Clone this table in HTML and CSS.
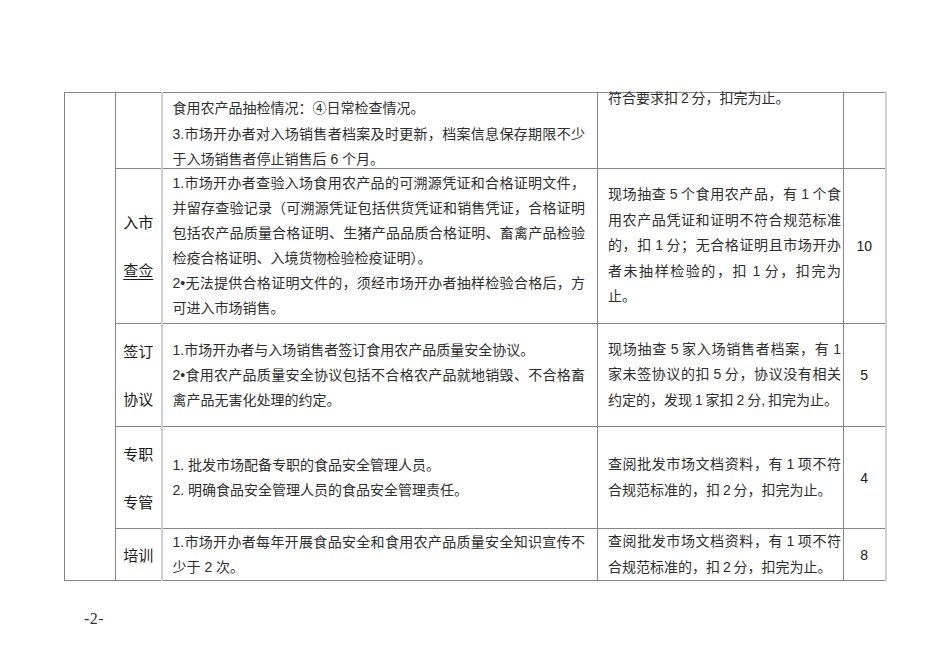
FILE: index.html
```html
<!DOCTYPE html>
<html lang="zh-CN">
<head>
<meta charset="utf-8">
<title>批发市场检查评分表</title>
<link rel="stylesheet" href="styles.css">
</head>
<body>
<div class="page">
  <table class="grid">
    <colgroup>
      <col class="w-cat">
      <col class="w-lab">
      <col class="w-req">
      <col class="w-std">
      <col class="w-pts">
    </colgroup>
    <tr class="r1">
      <td class="cat" rowspan="5"></td>
      <td class="lab"></td>
      <td class="req">
        <div class="first">
          <p>食用农产品抽检情况：④日常检查情况。</p>
          <p>3.市场开办者对入场销售者档案及时更新，档案信息保存期限不少于入场销售者停止销售后 6 个月。</p>
        </div>
      </td>
      <td class="std"><div class="carry">符合要求扣 2 分，扣完为止。</div></td>
      <td class="pts"></td>
    </tr>
    <tr class="r2">
      <td class="lab"><div>入市</div><div class="ul">查佥</div></td>
      <td class="req">
        <p>1.市场开办者查验入场食用农产品的可溯源凭证和合格证明文件，并留存查验记录（可溯源凭证包括供货凭证和销售凭证，合格证明包括农产品质量合格证明、生猪产品品质合格证明、畜禽产品检验检疫合格证明、入境货物检验检疫证明）。</p>
        <p>2•无法提供合格证明文件的，须经市场开办者抽样检验合格后，方可进入市场销售。</p>
      </td>
      <td class="std">现场抽查 5 个食用农产品，有 1 个食用农产品凭证和证明不符合规范标准的，扣 1 分；无合格证明且市场开办者未抽样检验的，扣 1 分，扣完为止。</td>
      <td class="pts">10</td>
    </tr>
    <tr class="r3">
      <td class="lab"><div>签订</div><div>协议</div></td>
      <td class="req">
        <p>1.市场开办者与入场销售者签订食用农产品质量安全协议。</p>
        <p>2•食用农产品质量安全协议包括不合格农产品就地销毁、不合格畜禽产品无害化处理的约定。</p>
      </td>
      <td class="std">现场抽查 5 家入场销售者档案，有 1 家未签协议的扣 5 分，协议没有相关约定的，发现 1 家扣 2 分, 扣完为止。</td>
      <td class="pts">5</td>
    </tr>
    <tr class="r4">
      <td class="lab"><div>专职</div><div>专管</div></td>
      <td class="req">
        <p>1. 批发市场配备专职的食品安全管理人员。</p>
        <p>2. 明确食品安全管理人员的食品安全管理责任。</p>
      </td>
      <td class="std">查阅批发市场文档资料，有 1 项不符合规范标准的，扣 2 分，扣完为止。</td>
      <td class="pts">4</td>
    </tr>
    <tr class="r5">
      <td class="lab"><div>培训</div></td>
      <td class="req">
        <p>1.市场开办者每年开展食品安全和食用农产品质量安全知识宣传不少于 2 次。</p>
      </td>
      <td class="std">查阅批发市场文档资料，有 1 项不符合规范标准的，扣 2 分，扣完为止。</td>
      <td class="pts">8</td>
    </tr>
  </table>
  <div class="folio">-2-</div>
</div>
</body>
</html>
```
FILE: styles.css
```css
* {
  box-sizing: border-box;
}

html, body {
  margin: 0;
  background: #ffffff;
}

body {
  font-family: "Liberation Sans", "Noto Sans CJK SC", sans-serif;
  color: #2e2e2e;
  font-size: 14px;
}

.page {
  width: 950px;
  height: 672px;
  padding: 92px 0 0 64px;
}

.grid {
  border-collapse: collapse;
  table-layout: fixed;
  width: 821px;
}

.w-cat { width: 51px; }
.w-lab { width: 46px; }
.w-req { width: 436px; }
.w-std { width: 246px; }
.w-pts { width: 42px; }

.grid td {
  border: 1px solid #858585;
  padding: 0;
  vertical-align: middle;
}

.r1 td { height: 76px; }
.r2 td { height: 155px; }
.r3 td { height: 103px; }
.r4 td { height: 102px; }
.r5 td { height: 52px; }

.grid td.req {
  border-left: 2px solid #d0d0d0;
  padding: 0 12px 0 10px;
  line-height: 25px;
  text-align: justify;
}

.req p {
  margin: 0;
}

.first {
  height: 73px;
  padding-top: 2px;
  line-height: 25.5px;
}

.grid td.std {
  padding: 0 2px 0 10px;
  line-height: 25.5px;
  text-align: justify;
  word-spacing: -1px;
}

.carry {
  margin-top: -4px;
  line-height: 18px;
  height: 72px;
}

.r1 td.std {
  vertical-align: top;
}

.grid td.lab {
  text-align: center;
  font-family: "Noto Sans CJK SC", sans-serif;
  font-size: 15px;
  color: #1a1a1a;
  line-height: 48px;
}

.ul {
  text-decoration: underline;
  text-underline-offset: 3px;
}

.grid td.pts {
  border-right: 2px solid #d0d0d0;
  text-align: center;
  font-size: 14px;
  color: #1a1a1a;
}

.folio {
  margin: 29px 0 0 20px;
  font-family: "Liberation Serif", "Times New Roman", serif;
  font-size: 16px;
  color: #333333;
  letter-spacing: 0.5px;
}
```
